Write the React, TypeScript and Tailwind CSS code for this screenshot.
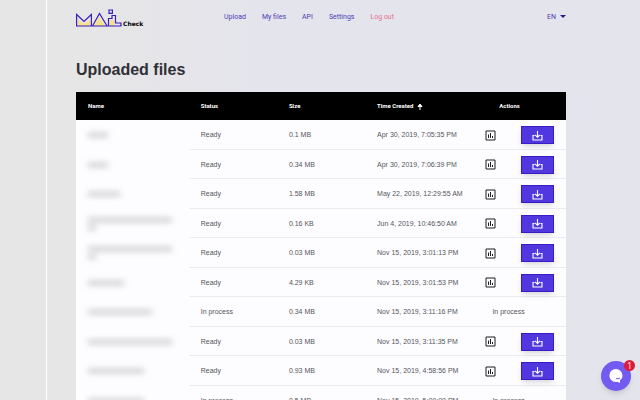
import React from "react";

type FileRow = {
  bars: string[];
  status: string;
  size: string;
  created: string;
};

const files: FileRow[] = [
  { bars: ["w-5"], status: "Ready", size: "0.1 MB", created: "Apr 30, 2019, 7:05:35 PM" },
  { bars: ["w-5"], status: "Ready", size: "0.34 MB", created: "Apr 30, 2019, 7:06:39 PM" },
  { bars: ["w-8"], status: "Ready", size: "1.58 MB", created: "May 22, 2019, 12:29:55 AM" },
  { bars: ["w-21", "w-2"], status: "Ready", size: "0.16 KB", created: "Jun 4, 2019, 10:46:50 AM" },
  { bars: ["w-21", "w-2"], status: "Ready", size: "0.03 MB", created: "Nov 15, 2019, 3:01:13 PM" },
  { bars: ["w-9"], status: "Ready", size: "4.29 KB", created: "Nov 15, 2019, 3:01:53 PM" },
  { bars: ["w-16"], status: "In process", size: "0.34 MB", created: "Nov 15, 2019, 3:11:16 PM" },
  { bars: ["w-21"], status: "Ready", size: "0.03 MB", created: "Nov 15, 2019, 3:11:35 PM" },
  { bars: ["w-14"], status: "Ready", size: "0.93 MB", created: "Nov 15, 2019, 4:58:56 PM" },
  { bars: ["w-14"], status: "In process", size: "0.5 MB", created: "Nov 15, 2019, 5:00:00 PM" },
];

const links = ["Upload", "My files", "API", "Settings"];

function Logo() {
  return (
    <a href="#" aria-label="Mail Check" className="flex items-end pt-0.5">
      <svg width="46" height="18" viewBox="0 0 46 18" fill="none" stroke="#3a1fb8" strokeWidth="1.2">
        <path d="M2 17v-6l6 4 6-4v6zM18 17l5-9 6 9zM34 17v-6h4v6z" fill="#f7e08c" stroke="none" />
        <path d="M.6 17V5.500L8 12.500 15.400 5.500V17" />
        <path d="M16.500 17 23.500 4.500 31 17" />
        <path d="M32.500 17V9.500h3.500V6.500h3.500V14h5.500v3" />
        <path d="M33 1h3.400v3.400H33zM0 17h45.400" />
      </svg>
      <span className="ml-px font-['DejaVu_Sans',sans-serif] text-[6px] leading-[6px] font-bold text-black">Check</span>
    </a>
  );
}

function ChartIcon() {
  return (
    <svg width="11" height="11" viewBox="0 0 22 22" fill="none" stroke="#1c1c20" strokeWidth="2">
      <path d="M2 2h18v18H2z" />
      <path d="M7 16V9M11 16V6M15 16v-4" />
    </svg>
  );
}

function DownloadIcon() {
  return (
    <svg width="11" height="11" viewBox="0 0 11 11" fill="none" stroke="#fff" strokeWidth="1.1">
      <path d="M5.500 1v6M3.200 5l2.300 2.300L7.800 5M2.500 5.500h-1.500v4.500h9v-4.500h-1.500" />
    </svg>
  );
}

function Row({ file }: { file: FileRow }) {
  const ready = file.status === "Ready";
  return (
    <tr className="odd:h-[30px] even:h-[29px]">
      <td className="pl-3">
        <div className="flex flex-col gap-1 blur-[3px]">
          {file.bars.map((width, i) => (
            <div key={i} className={`h-1 bg-[#c4c4c8] ${width}`} />
          ))}
        </div>
      </td>
      <td className="border-b border-[#ececf0] pt-px pl-3">{file.status}</td>
      <td className="border-b border-[#ececf0] pt-px pl-3">{file.size}</td>
      <td className="border-b border-[#ececf0] pt-px pl-3 whitespace-nowrap">{file.created}</td>
      <td className="border-b border-[#ececf0] pt-px pr-3 text-center">
        {ready ? (
          <div className="flex items-center justify-end gap-[25px]">
            <button aria-label="Statistics"><ChartIcon /></button>
            <button
              aria-label="Download"
              className="flex h-[18px] w-[33px] items-center justify-center border border-[#3a1cc4] bg-[#5038de] shadow-md"
            >
              <DownloadIcon />
            </button>
          </div>
        ) : (
          "In process"
        )}
      </td>
    </tr>
  );
}

export default function App() {
  return (
    <div className="relative flex h-screen overflow-hidden bg-linear-to-r from-[#e6e6e6] from-10% to-[#e4e4ec] to-40% font-['Roboto',sans-serif] text-[7px] leading-[10px] text-[#55555c]">
      <div className="w-[47px] shrink-0 border-r border-white" />
      <div className="flex-1 pr-[74px] pl-[29px]">
        <header className="flex h-[34px] items-center">
          <div className="w-[148px]"><Logo /></div>
          <nav className="flex flex-1 gap-4 text-[#4c3cb8]">
            {links.map((label) => (
              <a key={label} href="#">{label}</a>
            ))}
            <a href="#" className="text-[#e8708c]">Log out</a>
          </nav>
          <button className="flex items-center gap-1 text-[#4c3cb8]">
            EN
            <svg width="6" height="4" viewBox="0 0 6 4" fill="#2a1a90"><path d="M0 0h6L3 3z" /></svg>
          </button>
        </header>
        <h1 className="mt-6 mb-[11px] pt-px font-['Liberation_Sans',sans-serif] text-base leading-[22px] font-bold text-[#303036]">
          Uploaded files
        </h1>
        <table className="w-full table-fixed border-separate border-spacing-0 bg-[#fdfdff]">
          <thead>
            <tr className="h-7 bg-black text-left text-[6px] text-white">
              <th className="w-[23%] pl-3">Name</th>
              <th className="w-[18%] pl-3">Status</th>
              <th className="w-[18%] pl-3">Size</th>
              <th className="w-[20%] pl-3">
                <span className="flex items-center gap-1">
                  Time Created
                  <svg width="6" height="7" viewBox="0 0 6 7" fill="#fff" stroke="#fff"><path d="M3 7V2M1 3.500l2-2.500 2 2.500z" /></svg>
                </span>
              </th>
              <th className="w-[21%] pr-2.5 text-center">Actions</th>
            </tr>
          </thead>
          <tbody className="font-['Liberation_Sans',sans-serif]">
            {files.map((file) => (
              <Row key={file.created} file={file} />
            ))}
          </tbody>
        </table>
      </div>
      <button
        aria-label="Open chat"
        className="absolute right-[9px] bottom-[9px] flex size-[30px] items-center justify-center rounded-full bg-[#735af0] shadow-md"
      >
        <svg width="16" height="16" viewBox="0 0 16 16">
          <path d="M8 1a6.500 6.500 0 0 1 6.500 6.500c0 2-1 3.600-2.500 4.800V15l-2.600-1.200A6.500 6.500 0 1 1 8 1z" fill="#fff" />
          <path d="M8 10.500q2 .8 4-.5" stroke="#735af0" fill="none" />
        </svg>
        <span className="absolute -top-px -right-1 size-[11px] rounded-full bg-[#e0183a] text-center font-['Open_Sans',sans-serif] text-[9px] leading-[11px] text-white">1</span>
      </button>
    </div>
  );
}
